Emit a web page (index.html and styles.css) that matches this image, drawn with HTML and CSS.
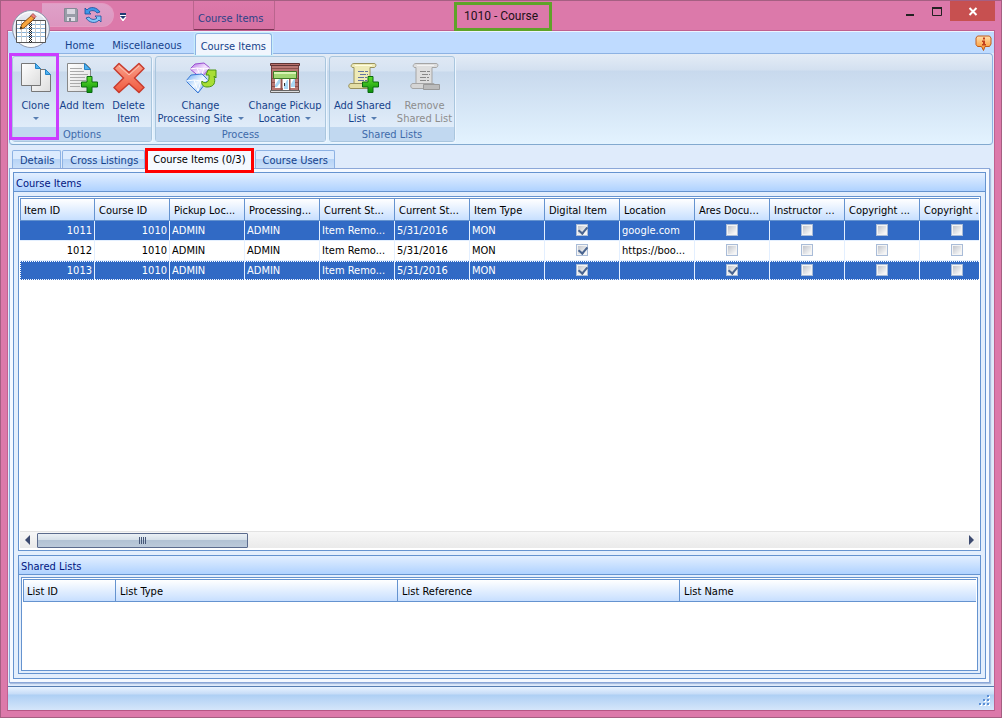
FILE: index.html
```
<!DOCTYPE html>
<html lang="en">
<head>
<meta charset="utf-8">
<title>1010 - Course</title>
<link rel="stylesheet" href="styles.css">
</head>
<body>
<svg class="defs" width="0" height="0" aria-hidden="true">
  <defs>
    <linearGradient id="page" x1="0" y1="0" x2="1" y2="1"><stop offset="0" stop-color="#fff"/><stop offset="1" stop-color="#dcdcdc"/></linearGradient>
    <linearGradient id="green" x1="0" y1="0" x2="0" y2="1"><stop offset="0" stop-color="#5fe02a"/><stop offset="1" stop-color="#0c8f0c"/></linearGradient>
    <linearGradient id="red" x1="0" y1="0" x2="0" y2="1"><stop offset="0" stop-color="#f9a28c"/><stop offset="1" stop-color="#f0573c"/></linearGradient>
    <linearGradient id="orange" x1="0" y1="0" x2="0" y2="1"><stop offset="0" stop-color="#ffe0b0"/><stop offset="1" stop-color="#fb8d1c"/></linearGradient>
    <linearGradient id="orb" x1="0" y1="0" x2="0" y2="1"><stop offset="0" stop-color="#f4f5f9"/><stop offset=".5" stop-color="#c6cede"/><stop offset="1" stop-color="#fff"/></linearGradient>
    <linearGradient id="violet" x1="0" y1="0" x2="1" y2="1"><stop offset="0" stop-color="#b06be0"/><stop offset=".5" stop-color="#f3e2ff"/><stop offset="1" stop-color="#b57be8"/></linearGradient>
    <linearGradient id="blue" x1="0" y1="0" x2="1" y2="1"><stop offset="0" stop-color="#6cabf4"/><stop offset=".5" stop-color="#eef7ff"/><stop offset="1" stop-color="#5d9cf0"/></linearGradient>
    <path id="plus" d="M7 .5h5v5.500h5.500v5H12v5.500H7V11H1.500V6H7z" fill="url(#green)" stroke="#0a6a12"/>
  </defs>
</svg>
<div class="window">
  <header class="titlebar">
    <button class="orb" aria-label="Application menu">
      <svg width="40" height="40" viewBox="0 0 40 40">
        <circle cx="20" cy="20" r="18.500" fill="url(#orb)" stroke="#8f98ad"/>
        <circle cx="20" cy="20" r="17" fill="none" stroke="#fff"/>
        <path d="M5.500 11.500h29v22h-29z" fill="#fff" stroke="#555"/>
        <path d="M6 15.500h28M6 19.500h28M6 23.500h28M6 27.500h28" stroke="#8ab4da"/>
        <path d="M10.500 12v21M15.500 12v21M24.500 12v21M29.500 12v21" stroke="#c8c8c8"/>
        <path d="M18.500 12v22" stroke="#222" stroke-dasharray="1 1"/>
        <path d="M19.500 13v21" stroke="#222" stroke-dasharray="1 1"/>
        <path d="M20.500 12v22" stroke="#222" stroke-dasharray="1 1"/>
        <path d="M9 20l2-5L21 6l3 3-11 10z" fill="#f7a53c" stroke="#8a4a12"/>
        <path d="M20 6.500l2-2 3 3-2 2z" fill="#ef8080" stroke="#8b3b3b" stroke-width=".7"/>
        <path d="M9 20l.8-2.500 1.700 1.600z" fill="#222"/>
      </svg>
    </button>
    <div class="quick">
      <button aria-label="Save">
        <svg width="16" height="16" viewBox="0 0 16 16"><path d="M1.500 1.500h12l1 1v12h-13z" fill="#999da8" stroke="#858895"/><path d="M4 2h8v5H4z" fill="#d9d6e0"/><path d="M4 10h8v4H4z" fill="#dfdce6"/><path d="M6 11h2v3H6z" fill="#858895"/></svg>
      </button>
      <button aria-label="Refresh">
        <svg width="18" height="18" viewBox="0 0 18 18"><path d="M1 2v6h6L5 6c2-2 6-2 8 1l3-1C13 1 6 0 3 4z" fill="#3f97e8" stroke="#164f9d" stroke-width=".8"/><path d="M17 16v-6h-6l2 2c-2 2-6 2-8-1l-3 1c3 5 10 6 13 2z" fill="#85c5f7" stroke="#164f9d" stroke-width=".8"/></svg>
      </button>
    </div>
    <button class="customize" aria-label="Customize toolbar"><svg width="7" height="8" viewBox="0 0 7 8"><path d="M0 2.500h6M0 4h6L3 8z" stroke="#fff" fill="#fff"/><path d="M0 0h6v2H0zM0 3h6L3 6z" fill="#203a72"/></svg></button>
    <span class="context">Course Items</span>
    <h1 class="caption">1010 - Course</h1>
    <div class="controls">
      <button aria-label="Minimize"><svg width="10" height="10"><path d="M1 8h8v2H1z" fill="#222"/></svg></button>
      <button aria-label="Maximize"><svg width="10" height="10"><path d="M.5 2h9v7.500h-9z" fill="none" stroke="#222"/><path d="M0 1h10v2H0z" fill="#222"/></svg></button>
      <button class="close" aria-label="Close"><svg width="10" height="10" viewBox="0 0 10 10"><path d="M1.500 2l7 7M8.500 2l-7 7" stroke="#fff" stroke-width="2"/></svg></button>
    </div>
  </header>

  <div class="client">
    <nav class="ribbon-tabs">
      <button>Home</button>
      <button>Miscellaneous</button>
      <button class="active">Course Items</button>
      <button class="info" aria-label="Information">
        <svg width="17" height="17" viewBox="0 0 17 17"><path d="M2.500 1h12l1.500 2v6l-1.500 2.500H10L8.500 15.500 6.500 11.500h-4L1 9.500V3z" fill="url(#orange)" stroke="#c05a1c"/><path d="M8 2.500h2v2H8zM7 5.500h3V9h1v1.500H7V9h1V7H7z" fill="#c2401c"/></svg>
      </button>
    </nav>

    <section class="ribbon">
      <div class="group">
        <div class="tools">
          <button class="tool narrow marked">
            <svg width="32" height="32" viewBox="0 0 32 32"><path d="M11.500 7.500h14l5 5v17h-19z" fill="url(#page)" stroke="#777"/><path d="M25.500 7.500v5h5z" fill="#4fb2f0" stroke="#2684c8"/><path d="M1.500 1.500h14l5 5v17h-19z" fill="url(#page)" stroke="#777"/><path d="M15.500 1.500v5h5z" fill="#4fb2f0" stroke="#2684c8"/></svg>
            <span>Clone</span><i class="arrow"></i>
          </button>
          <button class="tool middle">
            <svg width="32" height="32" viewBox="0 0 32 32"><path d="M1.500 1.500h18l5 5v23h-23z" fill="url(#page)" stroke="#888"/><path d="M18.500 1.500v6h6z" fill="#4fb2f0" stroke="#2684c8"/><path d="M4 6.500h12M4 9.500h14M4 12.500h18M4 15.500h15M4 18.500h16M4 21.500h14M4 24.500h10" stroke="#aaa"/><use href="#plus" x="14" y="14"/></svg>
            <span>Add Item</span>
          </button>
          <button class="tool narrow">
            <svg width="32" height="32" viewBox="0 0 32 32"><path d="M6 1.500l10 9 10-9 5 5-9.500 9.500 9.500 9.500-5 5-10-9-10 9-5-5L10.500 16 1 6.500z" fill="url(#red)" stroke="#c83c2e" stroke-width="1.500" stroke-linejoin="round"/><path d="M6 4l10 9 10-9" fill="none" stroke="#fbc5b5"/></svg>
            <span>Delete<br>Item</span>
          </button>
        </div>
        <h2>Options</h2>
      </div>
      <div class="group">
        <div class="tools">
          <button class="tool site">
            <svg width="32" height="32" viewBox="0 0 32 32"><path d="M5 7l5-5 9-1 6 5-9 10z" fill="url(#violet)" stroke="#9a50d0"/><path d="M5 7l7-1 7 1 6-1M12 6l4 9 3-9" fill="none" stroke="#fff"/><path d="M1 19l5-6 11-1 6 6-10 13z" fill="url(#blue)" stroke="#3a78d4"/><path d="M1 19l8-1 7 1 7-1M9 18l4 11 3-10" fill="none" stroke="#fff"/><path d="M17 19c2 3 7 2 7-3v-3h-3l2-5h8v8l-2-2c2 7 0 11-7 11-4 0-6-3-5-6z" fill="#a8de34" stroke="#4c9410"/></svg>
            <span>Change<br>Processing Site <i class="arrow"></i></span>
          </button>
          <button class="tool place">
            <svg width="32" height="32" viewBox="0 0 32 32"><path d="M2.500 2.500h27v26h-27z" fill="#b87672" stroke="#71413f"/><path d="M3 6.500h26M3 20.500h3M26 20.500h3M3 24.500h3M26 24.500h3M3 16.500h3M26 16.500h3" stroke="#8c504d"/><path d="M1.500 1.500h29v2h-29z" fill="#b8706b" stroke="#603535"/><path d="M6 16h20v10H6z" fill="#fff"/><path d="M12.500 17v11M20.500 17v11" stroke="#925550" stroke-width="2"/><path d="M14 17h6v11h-6z" fill="#fff"/><path d="M6 23l4-6h1v4l-3 4H6zM22 22l3-5h1v8h-4zM15 24l3-6h1v9h-4z" fill="#a9d7f5"/><path d="M15.500 21v3" stroke="#333"/><path d="M4.500 9.500h23v7h-23z" fill="#a2d773" stroke="#3c7c26"/><path d="M5 11h22" stroke="#d8f4b4" stroke-width="2"/><path d="M1.500 28.500h29v2h-29z" fill="#ddd" stroke="#666"/></svg>
            <span>Change Pickup<br>Location <i class="arrow"></i></span>
          </button>
        </div>
        <h2>Process</h2>
      </div>
      <div class="group">
        <div class="tools">
          <button class="tool list">
            <svg width="32" height="32" viewBox="0 0 32 32"><path d="M7 1.500h20c3 0 2 4 0 4h-4v18H7V5.500H6c-3 0-2-4 1-4z" fill="#eeeab7" stroke="#99925d"/><path d="M8 3h17v1H8z" fill="#fffce0"/><path d="M10 21.500H4c-3 0-3 5 0 5h20c3 0 3-5 0-5z" fill="#e3dea5" stroke="#99925d"/><path d="M11 9.500h10M13 12.500h8M11 15.500h9M11 18.500h9" stroke="#6473a0" stroke-dasharray="6 1"/><use href="#plus" x="14" y="14"/></svg>
            <span>Add Shared<br>List <i class="arrow"></i></span>
          </button>
          <button class="tool removal" disabled>
            <svg width="32" height="32" viewBox="0 0 32 32"><path d="M7 1.500h20c3 0 2 4 0 4h-4v18H7V5.500H6c-3 0-2-4 1-4z" fill="#dedede" stroke="#a5a5a5"/><path d="M8 3h17v1H8z" fill="#f2f2f2"/><path d="M10 21.500H4c-3 0-3 5 0 5h20c3 0 3-5 0-5z" fill="#d5d5d5" stroke="#a5a5a5"/><path d="M11 9.500h10M13 12.500h8M11 15.500h9M11 18.500h9" stroke="#888" stroke-dasharray="6 1"/><path d="M14.500 22.500h16v5h-16z" fill="#bbb" stroke="#999"/></svg>
            <span>Remove<br>Shared List</span>
          </button>
        </div>
        <h2>Shared Lists</h2>
      </div>
    </section>

    <nav class="tabs">
      <button>Details</button>
      <button>Cross Listings</button>
      <button class="active">Course Items (0/3)</button>
      <button>Course Users</button>
    </nav>

    <main class="page">
      <section class="panel">
        <h2>Course Items</h2>
        <div class="body">
          <div class="grid items">
            <div class="clip">
              <table>
                <thead><tr><th>Item ID</th><th>Course ID</th><th>Pickup Loc...</th><th>Processing...</th><th>Current St...</th><th>Current St...</th><th>Item Type</th><th>Digital Item</th><th>Location</th><th>Ares Docu...</th><th>Instructor ...</th><th>Copyright ...</th><th>Copyright .</th></tr></thead>
                <tbody>
                  <tr class="selected"><td class="num">1011</td><td class="num">1010</td><td>ADMIN</td><td>ADMIN</td><td>Item Remo...</td><td>5/31/2016</td><td>MON</td><td class="check"><input type="checkbox" aria-label="Digital Item" checked></td><td>google.com</td><td class="check"><input type="checkbox" aria-label="Ares Document"></td><td class="check"><input type="checkbox" aria-label="Instructor"></td><td class="check"><input type="checkbox" aria-label="Copyright"></td><td class="check"><input type="checkbox" aria-label="Copyright"></td></tr>
                  <tr><td class="num">1012</td><td class="num">1010</td><td>ADMIN</td><td>ADMIN</td><td>Item Remo...</td><td>5/31/2016</td><td>MON</td><td class="check"><input type="checkbox" aria-label="Digital Item" checked></td><td>https://boo...</td><td class="check"><input type="checkbox" aria-label="Ares Document"></td><td class="check"><input type="checkbox" aria-label="Instructor"></td><td class="check"><input type="checkbox" aria-label="Copyright"></td><td class="check"><input type="checkbox" aria-label="Copyright"></td></tr>
                  <tr class="selected focused"><td class="num">1013</td><td class="num">1010</td><td>ADMIN</td><td>ADMIN</td><td>Item Remo...</td><td>5/31/2016</td><td>MON</td><td class="check"><input type="checkbox" aria-label="Digital Item" checked></td><td></td><td class="check"><input type="checkbox" aria-label="Ares Document" checked></td><td class="check"><input type="checkbox" aria-label="Instructor"></td><td class="check"><input type="checkbox" aria-label="Copyright"></td><td class="check"><input type="checkbox" aria-label="Copyright"></td></tr>
                </tbody>
              </table>
            </div>
            <div class="scrollbar">
              <button aria-label="Scroll left"><svg width="5" height="10"><path d="M5 0v10L0 5z" fill="#3c4a70"/></svg></button>
              <div class="track"><div class="thumb"><i></i><i></i><i></i><i></i></div></div>
              <button aria-label="Scroll right"><svg width="5" height="10"><path d="M0 0v10l5-5z" fill="#3c4a70"/></svg></button>
            </div>
          </div>
          <section class="panel shared">
            <h2>Shared Lists</h2>
            <div class="grid lists">
              <table>
                <colgroup><col class="id"><col class="third"><col class="third"><col></colgroup>
                <thead><tr><th>List ID</th><th>List Type</th><th>List Reference</th><th>List Name</th></tr></thead>
              </table>
            </div>
          </section>
        </div>
      </section>
    </main>

    <footer class="status">
      <svg width="13" height="13" viewBox="0 0 13 13"><path d="M10 2h2v2h-2zM6 6h2v2H6zM10 6h2v2h-2zM2 10h2v2H2zM6 10h2v2H6zM10 10h2v2h-2z" fill="#fff"/><path d="M9 1h2v2H9zM5 5h2v2H5zM9 5h2v2H9zM1 9h2v2H1zM5 9h2v2H5zM9 9h2v2H9z" fill="#5b8fd6"/></svg>
    </footer>
  </div>
</div>
</body>
</html>
```
FILE: styles.css
```
* { box-sizing: border-box; }
body {
  margin: 0;
  font: 11px/13px Tahoma, "DejaVu Sans Condensed", "Noto Sans", sans-serif;
  color: #000;
}
button {
  margin: 0;
  padding: 0;
  border: 0;
  background: none;
  font: inherit;
  color: #15428b;
}
svg { display: block; }
.defs { position: absolute; }
h1, h2 { margin: 0; font: inherit; }

.window {
  display: flex;
  flex-direction: column;
  height: 100vh;
  padding: 0 6px 6px;
  border: 1px solid #a55f82;
  background: #dc79aa;
}
.titlebar {
  position: relative;
  display: flex;
  align-items: flex-start;
  height: 29px;
  flex: none;
}
.orb { position: absolute; left: 4px; top: 8px; z-index: 2; }
.quick {
  display: flex;
  align-items: center;
  gap: 5px;
  width: 72px;
  height: 24px;
  margin: 2px 0 0 35px;
  padding-left: 21px;
  border: 1px solid #e39bc2;
  border-left: 0;
  border-radius: 0 12px 12px 0;
  background: linear-gradient(#dfa1c8, #dc96c0);
}
.customize { margin: 12px 0 0 6px; }
.context {
  width: 82px;
  height: 29px;
  margin-left: 66px;
  padding-left: 4px;
  border: 1px solid #b9658d;
  border-width: 0 1px;
  box-shadow: inset 0 -1px #7c3355;
  background: linear-gradient(#dc79aa, #d671a2);
  color: #2b4288;
  line-height: 35px;
}
.caption {
  position: absolute;
  left: 50%;
  top: 1px;
  width: 98px;
  height: 29px;
  margin-left: -47px;
  padding-right: 4px;
  border: 3px solid #5fa329;
  font: 12px/23px Roboto, sans-serif;
  text-align: center;
  color: #1d1119;
  z-index: 2;
}
.controls { display: flex; margin-left: auto; }
.controls button {
  display: flex;
  align-items: center;
  justify-content: center;
  width: 27px;
  height: 20px;
}
.controls .close { width: 45px; background: #c75050; }

.client {
  display: flex;
  flex-direction: column;
  flex: 1;
  min-height: 0;
  border: 1px solid #c0608f;
  border-bottom-color: #b55684;
  background: #dfebfb;
}
.ribbon-tabs {
  display: flex;
  height: 22px;
  flex: none;
  padding: 1px 2px 0 48px;
  border-top: 1px solid #eef4ff;
  background: #bfdbff;
}
.ribbon-tabs button { padding: 4px 9px 0; }
.ribbon-tabs .active {
  height: 22px;
  margin-left: 4px;
  padding: 3px 5px 0;
  border: 1px solid #8db2e3;
  border-bottom: 0;
  border-radius: 3px 3px 0 0;
  background: #f1f6fd;
  box-shadow: 0 0 1px 1px #c9f0fa;
  z-index: 1;
}
.ribbon-tabs .info { margin-left: auto; padding: 0; }

.ribbon {
  display: flex;
  gap: 3px;
  height: 92px;
  flex: none;
  margin: 0 1px;
  padding: 2px;
  border: 1px solid #8db2e3;
  border-radius: 4px;
  border-bottom-color: #82a9cf;
  background: linear-gradient(#e4ecf6 0, #d3e0f0 16px, #c8d9ed 17px, #e3f3ff 100%);
}
.group {
  display: flex;
  flex-direction: column;
  border: 1px solid #a9c6de;
  border-radius: 3px;
  background: linear-gradient(#dfe8f4 0, #d6e3f2 14px, #c8d9ec 15px, #e0ecf9 70px);
  box-shadow: 1px 1px #edf6ff;
}
.group h2 {
  height: 14px;
  background: #c1d8f0;
  color: #3e6aaa;
  line-height: 15px;
  text-align: center;
}
.tools { display: flex; flex: 1; }
.tool {
  position: relative;
  display: flex;
  flex-direction: column;
  align-items: center;
  padding-top: 5px;
  white-space: nowrap;
}
.tool span { margin-top: 5px; }
.tool:disabled { color: #8d8d8d; }
.narrow { width: 45px; }
.middle { width: 48px; }
.site { width: 89px; }
.place { width: 80px; }
.list { width: 65px; }
.removal { width: 59px; }
.arrow {
  display: inline-block;
  width: 0;
  margin: 0 0 2px 2px;
  border: 3px solid transparent;
  border-top-color: #567db1;
  border-bottom: 0;
}
.narrow > .arrow { margin: 5px 0 0; }
.marked::after {
  content: "";
  position: absolute;
  inset: -4px -1px -13px -4px;
  border: 3px solid #cb3dff;
  z-index: 2;
}

.tabs {
  display: flex;
  align-items: flex-end;
  gap: 1px;
  height: 23px;
  flex: none;
  padding-left: 4px;
}
.tabs button {
  height: 18px;
  padding: 1px 6px 0 7px;
  border: 1px solid #8db2e3;
  border-bottom: 0;
  border-radius: 2px 2px 0 0;
  background: linear-gradient(#dcebfe 0 45%, #b8d4f6 50%, #c9dff9);
  white-space: nowrap;
}
.tabs .active {
  height: 25px;
  margin: 0 0 -5px -1px;
  padding: 0 5px 3px;
  border: 3px solid #f00;
  border-radius: 0;
  background: #f5f9ff;
  color: #000;
  z-index: 1;
}

.page {
  display: flex;
  flex: 1;
  min-height: 0;
  margin: 0 4px 3px 1px;
  padding: 3px;
  border: 1px solid #8ba7d8;
  background: #f5f9ff;
  box-shadow: 1px 1px 1px #a9bedf;
}
.panel {
  display: flex;
  flex-direction: column;
  flex: 1;
  min-width: 0;
  border: 1px solid #6593cf;
  background: #e3eefc;
}
.panel h2 {
  height: 19px;
  flex: none;
  padding-left: 2px;
  border-bottom: 1px solid #6593cf;
  background: linear-gradient(#e3efff, #afd2ff);
  color: #00157f;
  line-height: 21px;
}
.body {
  display: flex;
  flex-direction: column;
  flex: 1;
  gap: 4px;
  min-height: 0;
  padding: 4px;
}
.grid {
  display: flex;
  flex-direction: column;
  min-width: 0;
  border: 1px solid #6593cf;
  background: #fff;
  overflow: hidden;
}
.items { flex: 1; min-height: 0; }
.clip { flex: 1; min-height: 0; margin: 1px 1px 0; overflow: hidden; }
table {
  border-collapse: separate;
  border-spacing: 0;
  table-layout: fixed;
}
.clip table { width: 975px; }
th, td {
  white-space: nowrap;
  font-weight: normal;
  text-align: left;
}
th {
  height: 23px;
  padding: 2px 4px 0;
  border: 1px solid #6593cf;
  border-left: 0;
  background: linear-gradient(#fff, #c7dfff);
}
th:first-child { padding-left: 3px; border-left: 1px solid #6593cf; }
td {
  height: 20px;
  padding: 0 2px;
  border-right: 1px solid #e3efff;
  border-bottom: 1px solid #e3efff;
}
td.num { text-align: right; }
td.check { text-align: center; }
.selected td { background: #316ac5; color: #fff; }
.focused td {
  height: 19px;
  border-bottom: 1px dotted #fff;
  border-top: 1px dotted #fff;
}
.focused td:first-child { border-left: 1px dotted #fff; }
input[type="checkbox"] {
  appearance: none;
  display: block;
  width: 12px;
  height: 12px;
  margin: 0 auto 2px;
  border: 1px solid #a9bcd8;
  outline: 1px solid #f4f4f4;
  outline-offset: -2px;
  background: linear-gradient(135deg, #b9bdc6, #f6f6f6 80%);
}
input[type="checkbox"]:checked::before {
  content: "";
  display: block;
  width: 4px;
  height: 7px;
  margin: 0 0 0 3px;
  border: solid #4a6590;
  border-width: 0 2px 2px 0;
  transform: rotate(40deg);
}
.scrollbar {
  display: flex;
  align-items: center;
  height: 17px;
  flex: none;
  margin: 0 1px 2px;
  padding: 0 5px;
  border-top: 1px solid #e3e3e3;
  background: linear-gradient(#f7f7f7, #eaeaea);
}
.track { flex: 1; padding-left: 7px; }
.thumb {
  display: flex;
  justify-content: center;
  align-items: center;
  gap: 1px;
  width: 211px;
  height: 15px;
  border: 1px solid #5b6b8d;
  border-radius: 1px;
  background: linear-gradient(#eaf0f5, #d6e0e9 45%, #b2c2d4 50%, #bccada);
}
.thumb i { width: 1px; height: 7px; background: #465778; }
.shared { flex: none; height: 119px; }
.lists { flex: 1; margin: 2px; padding: 1px; }
.lists table { width: 100%; }
.lists th:last-child { border-right: 0; }
.lists .id { width: 93px; }
.lists .third { width: 282px; }

.status {
  display: flex;
  justify-content: flex-end;
  align-items: flex-end;
  height: 24px;
  flex: none;
  padding: 3px;
  border-top: 1px solid #567db1;
  background: linear-gradient(#e9f3ff, #c6dcf7 7px, #aecff4 8px, #d5e6fa);
}
```
